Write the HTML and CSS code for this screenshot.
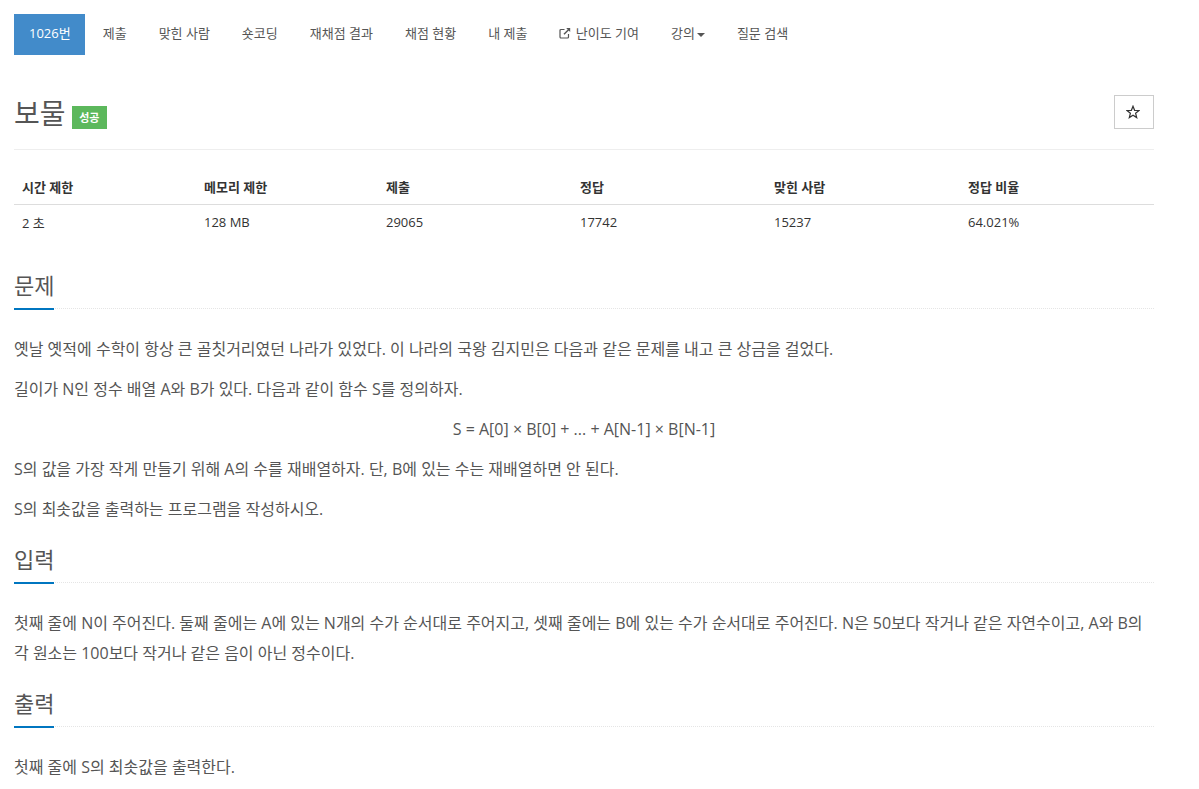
FILE: index.html
```html
<!DOCTYPE html>
<html lang="ko">
<head>
    <meta charset="UTF-8">
    <meta name="viewport" content="width=device-width, initial-scale=1.0">
    <title>1026번: 보물</title>
    <link rel="stylesheet" href="styles.css">
</head>
<body>
    <div class="container">
        <ul class="problem-menu">
            <li class="active"><a href="#">1026번</a></li>
            <li><a href="#">제출</a></li>
            <li><a href="#">맞힌 사람</a></li>
            <li><a href="#">숏코딩</a></li>
            <li><a href="#">재채점 결과</a></li>
            <li><a href="#">채점 현황</a></li>
            <li><a href="#">내 제출</a></li>
            <li>
                <a href="#">
                    <svg class="icon-external" viewBox="0 0 12 12" width="12" height="12">
                        <path d="M9.5 7v3a1 1 0 0 1-1 1H2a1 1 0 0 1-1-1V3.5a1 1 0 0 1 1-1h3.5" fill="none" stroke="#555" stroke-width="1.2"/>
                        <path d="M5 7.2 10 2.2" fill="none" stroke="#555" stroke-width="1.4"/>
                        <path d="M7.2 1h4v4z" fill="#555"/>
                    </svg>
                    난이도 기여
                </a>
            </li>
            <li><a href="#">강의<span class="caret"></span></a></li>
            <li><a href="#">질문 검색</a></li>
        </ul>

        <div class="page-header">
            <h1>보물 <span class="label-success">성공</span></h1>
            <button type="button" class="btn-star">
                <svg viewBox="0 0 14 14" width="14" height="14">
                    <path d="M7 1.2 8.6 5.3 13 5.5 9.6 8.2 10.7 12.6 7 10.2 3.3 12.6 4.4 8.2 1 5.5 5.4 5.3z" fill="none" stroke="#333" stroke-width="1.2"/>
                </svg>
            </button>
        </div>

        <table class="problem-info">
            <colgroup>
                <col class="col-narrow">
                <col class="col-narrow">
                <col class="col-wide">
                <col class="col-wide">
                <col class="col-wide">
                <col>
            </colgroup>
            <thead>
                <tr>
                    <th>시간 제한</th>
                    <th>메모리 제한</th>
                    <th>제출</th>
                    <th>정답</th>
                    <th>맞힌 사람</th>
                    <th>정답 비율</th>
                </tr>
            </thead>
            <tbody>
                <tr>
                    <td>2 초</td>
                    <td>128 MB</td>
                    <td>29065</td>
                    <td>17742</td>
                    <td>15237</td>
                    <td>64.021%</td>
                </tr>
            </tbody>
        </table>

        <section class="problem-section">
            <div class="headline"><h2>문제</h2></div>
            <p>옛날 옛적에 수학이 항상 큰 골칫거리였던 나라가 있었다. 이 나라의 국왕 김지민은 다음과 같은 문제를 내고 큰 상금을 걸었다.</p>
            <p>길이가 N인 정수 배열 A와 B가 있다. 다음과 같이 함수 S를 정의하자.</p>
            <p class="formula">S = A[0] × B[0] + ... + A[N-1] × B[N-1]</p>
            <p>S의 값을 가장 작게 만들기 위해 A의 수를 재배열하자. 단, B에 있는 수는 재배열하면 안 된다.</p>
            <p>S의 최솟값을 출력하는 프로그램을 작성하시오.</p>
        </section>

        <section class="problem-section">
            <div class="headline"><h2>입력</h2></div>
            <p>첫째 줄에 N이 주어진다. 둘째 줄에는 A에 있는 N개의 수가 순서대로 주어지고, 셋째 줄에는 B에 있는 수가 순서대로 주어진다. N은 50보다 작거나 같은 자연수이고, A와 B의 각 원소는 100보다 작거나 같은 음이 아닌 정수이다.</p>
        </section>

        <section class="problem-section">
            <div class="headline"><h2>출력</h2></div>
            <p>첫째 줄에 S의 최솟값을 출력한다.</p>
        </section>
    </div>
</body>
</html>
```

FILE: styles.css
```css
* {
    margin: 0;
    padding: 0;
    box-sizing: border-box;
}
body {
    font-family: 'Open Sans', 'Noto Sans CJK KR', sans-serif;
    font-size: 16px;
    color: #555;
    background: #fff;
}
a {
    color: inherit;
    text-decoration: none;
}
.container {
    width: 1140px;
    margin-left: 14px;
    padding-top: 14px;
}
.problem-menu {
    display: flex;
    gap: 2px;
    list-style: none;
    height: 41px;
}
.problem-menu a {
    display: block;
    padding: 0 15px;
    line-height: 39px;
    height: 41px;
    font-size: 13px;
    white-space: nowrap;
}
.problem-menu .active {
    margin-right: 1px;
}
.problem-menu .active a {
    padding-right: 14px;
    background: #428bca;
    color: #fff;
}
.icon-external {
    margin-right: 1px;
    vertical-align: -1px;
}
.caret {
    display: inline-block;
    margin-left: 2px;
    vertical-align: middle;
    border-top: 4px solid #555;
    border-left: 4px solid transparent;
    border-right: 4px solid transparent;
}
.page-header {
    display: flex;
    justify-content: space-between;
    margin-top: 40px;
    height: 55px;
    border-bottom: 1px solid #eee;
}
h1 {
    font-size: 28px;
    font-weight: 400;
    line-height: 36px;
}
.label-success {
    display: inline-block;
    margin-left: -1px;
    vertical-align: 2px;
    background: #5cb85c;
    color: #fff;
    font-size: 11px;
    font-weight: 700;
    line-height: 23px;
    width: 35px;
    text-align: center;
}
.btn-star {
    width: 40px;
    height: 34px;
    padding-right: 2px;
    background: #fff;
    border: 1px solid #ccc;
}
.btn-star svg {
    display: block;
    margin: 0 auto;
}
.problem-info {
    width: 100%;
    margin-top: 19px;
    border-collapse: collapse;
    table-layout: fixed;
    font-size: 13px;
    color: #333;
}
.col-narrow {
    width: 182px;
}
.col-wide {
    width: 194px;
}
.problem-info th {
    text-align: left;
    padding: 8px;
    height: 35px;
    border-bottom: 1px solid #ddd;
}
.problem-info td {
    padding: 0 8px;
    height: 35px;
}
.problem-section {
    margin-bottom: 21px;
}
.problem-info + .problem-section {
    margin-top: 31px;
}
.headline {
    border-bottom: 1px dotted #e5e5e5;
    height: 38px;
    margin-bottom: 25px;
}
.headline h2 {
    display: inline-block;
    width: 40px;
    height: 39px;
    border-bottom: 2px solid #0076c0;
    font-size: 22px;
    font-weight: 400;
    line-height: 28px;
    white-space: nowrap;
}
.problem-section p {
    line-height: 30px;
    margin-bottom: 10px;
}
.formula {
    text-align: center;
}
```
